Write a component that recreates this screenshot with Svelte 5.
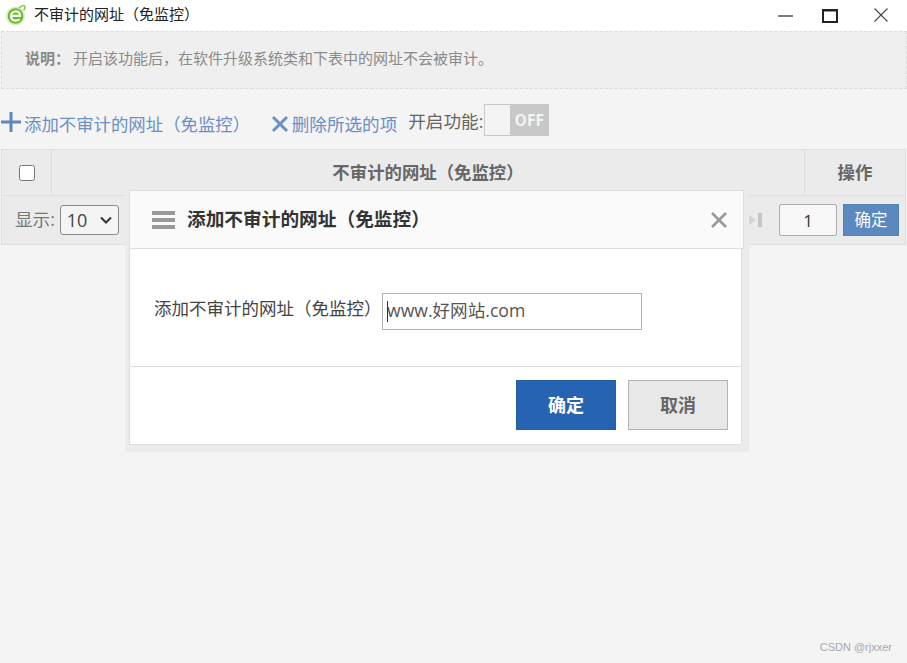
<script lang="ts">
  const title = "不审计的网址（免监控）";
  let url = $state("www.好网站.com");
  let enabled = $state(false);
  let pageSize = $state("10");
  let page = $state("1");
  let modalOpen = $state(true);
</script>

<div class="page">
  <header class="titlebar">
    <svg class="app-icon" width="20" height="22" viewBox="0 0 20 22">
      <circle cx="9.500" cy="12" r="9.500" fill="#dfe8d2" />
      <circle cx="9.500" cy="12" r="7.800" fill="#62c01a" />
      <path d="M5 11.800h9c0-3-1.900-4.400-4.400-4.400-2.800 0-4.600 2-4.600 4.700s1.800 4.600 4.700 4.600c1.600 0 2.900-.5 3.900-1.400" fill="none" stroke="#fff" stroke-width="2.200" />
      <path d="M13 4c2.200-1.900 4.500-2.800 5.500-2.200.9.600.4 2.600-.8 4.700" fill="none" stroke="#7ccb3a" stroke-width="1.500" />
    </svg>
    <span class="window-title">{title}</span>
    <div class="window-controls">
      <svg width="16" height="16" viewBox="0 0 16 16"><path d="M0 9h15" stroke="#222" stroke-width="1.200" /></svg>
      <svg width="16" height="16" viewBox="0 0 16 16"><path d="M1 3h14v12H1zM1 3.500h14" fill="none" stroke="#222" stroke-width="2" /></svg>
      <svg width="16" height="16" viewBox="0 0 16 16"><path d="M1.500 1.500l13 13M14.500 1.500l-13 13" stroke="#444" stroke-width="1.100" /></svg>
    </div>
  </header>

  <div class="notice">
    <b>说明：</b><span>开启该功能后，在软件升级系统类和下表中的网址不会被审计。</span>
  </div>

  <div class="toolbar">
    <button class="tool-btn add">
      <svg width="20" height="20" viewBox="0 0 20 20"><path d="M10 0v20M0 10h20" stroke="#5f87bd" stroke-width="3" /></svg>
      <span>添加不审计的网址（免监控）</span>
    </button>
    <button class="tool-btn remove">
      <svg width="18" height="18" viewBox="0 0 18 18"><path d="M2 2l14 14M16 2L2 16" stroke="#6b92c6" stroke-width="3" /></svg>
      <span>删除所选的项</span>
    </button>
    <span class="switch-label">开启功能:</span>
    <button class="switch" onclick={() => (enabled = !enabled)}>
      <span class="knob"></span>
      <span class="state">{enabled ? "ON" : "OFF"}</span>
    </button>
  </div>

  <div class="table">
    <div class="thead">
      <div class="cell-check"><input type="checkbox" /></div>
      <div class="cell-name">{title}</div>
      <div class="cell-action">操作</div>
    </div>
    <div class="tfoot">
      <span class="show-label">显示:</span>
      <div class="select-wrap">
        <select bind:value={pageSize}>
          <option>10</option>
          <option>20</option>
          <option>50</option>
        </select>
        <svg width="12" height="8" viewBox="0 0 12 8"><path d="M1 1.500l5 5 5-5" fill="none" stroke="#333" stroke-width="2" /></svg>
      </div>
      <svg class="last-page" width="14" height="14" viewBox="0 0 14 14">
        <path d="M0 1l8 6-8 6z" fill="#d4d4d4" />
        <path d="M10 0h4v14h-4z" fill="#c4c4c4" />
      </svg>
      <input class="page-input" bind:value={page} />
      <button class="go-btn">确定</button>
    </div>
  </div>

  <div class="watermark">CSDN @rjxxer</div>

  {#if modalOpen}
    <div class="modal">
      <div class="modal-head">
        <svg width="23" height="18" viewBox="0 0 23 18">
          <path d="M0 0h23v4H0zM0 7h23v4H0zM0 14h23v4H0z" fill="#999" />
        </svg>
        <h2>添加不审计的网址（免监控）</h2>
        <button class="close" aria-label="关闭" onclick={() => (modalOpen = false)}>
          <svg width="16" height="16" viewBox="0 0 16 16"><path d="M1 1l14 14M15 1L1 15" stroke="#999" stroke-width="2.600" /></svg>
        </button>
      </div>
      <div class="modal-body">
        <label for="url-input">添加不审计的网址（免监控）</label>
        <div class="input-wrap">
          <span class="caret"></span>
          <input id="url-input" bind:value={url} />
        </div>
      </div>
      <div class="modal-foot">
        <button class="btn primary">确定</button>
        <button class="btn" onclick={() => (modalOpen = false)}>取消</button>
      </div>
    </div>
  {/if}
</div>

<style>
  :global(body) {
    margin: 0;
    background: #f4f4f4;
    font-family: "Open Sans", "Noto Sans CJK SC", sans-serif;
  }

  .page {
    position: relative;
    height: 663px;
    overflow: hidden;
    background: #f4f4f4;
    color: #555;
  }

  button {
    font-family: inherit;
    cursor: pointer;
  }

  .titlebar {
    display: flex;
    align-items: center;
    height: 31px;
    box-sizing: border-box;
    padding: 0 0 2px 6px;
    background: #fff;
  }

  .app-icon {
    margin-right: 8px;
  }

  .window-title {
    padding-bottom: 2px;
    font-size: 15px;
    color: #222;
  }

  .window-controls {
    display: flex;
    gap: 28px;
    margin-left: auto;
    margin-right: 18px;
  }

  .window-controls svg:last-child {
    margin-left: 7px;
  }

  .notice {
    display: flex;
    align-items: center;
    height: 58px;
    box-sizing: border-box;
    margin: 0 0 0 1px;
    padding: 0 0 6px 23px;
    background: #efefef;
    border: 1px dashed #dcdcdc;
    font-size: 15px;
    color: #8a8a8a;
  }

  .notice b {
    color: #888;
    margin-right: 3px;
  }

  .toolbar {
    display: flex;
    align-items: center;
    height: 60px;
    padding-top: 1px;
    box-sizing: border-box;
    font-size: 17.600px;
  }

  .tool-btn {
    display: flex;
    align-items: center;
    padding: 8px 0 0;
    border: 0;
    background: none;
    font-size: 17.600px;
    color: #6d8fc4;
  }

  .tool-btn.add {
    gap: 3px;
    margin-left: 1px;
    font-size: 17.400px;
  }

  .tool-btn.add svg {
    margin-bottom: 4px;
  }

  .tool-btn.remove {
    gap: 3px;
    margin-left: 20.600px;
  }

  .switch-label {
    margin-left: 11px;
    padding-top: 1px;
    color: #666;
  }

  .switch {
    display: flex;
    width: 65px;
    height: 32px;
    padding: 0;
    margin-left: 1px;
    border: 1px solid #c8c8c8;
    background: #c8c8c8;
  }

  .knob {
    width: 25px;
    height: 100%;
    background: #f4f4f4;
  }

  .state {
    flex: 1;
    line-height: 30px;
    font-size: 15.500px;
    font-weight: 700;
    color: #f5f5f5;
    text-align: center;
  }

  .table {
    margin: 0 1px;
    background: #ebebeb;
    border: 1px solid #dedede;
  }

  .thead {
    display: flex;
    height: 45px;
    border-bottom: 1px solid #dedede;
    font-size: 17.400px;
    font-weight: 700;
    color: #666;
  }

  .cell-check {
    display: flex;
    align-items: center;
    justify-content: center;
    width: 50px;
    padding-left: 1px;
    box-sizing: border-box;
    border-right: 1px solid #dedede;
  }

  .cell-check input {
    width: 16px;
    height: 16px;
    margin: 0;
  }

  .cell-name {
    flex: 1;
    line-height: 45px;
    text-align: center;
  }

  .cell-action {
    width: 100px;
    line-height: 45px;
    text-align: center;
    border-left: 1px solid #dedede;
  }

  .tfoot {
    display: flex;
    align-items: center;
    height: 48px;
    padding: 0 6px 0 13px;
    font-size: 17.600px;
  }

  .show-label {
    margin-right: 5px;
    padding-bottom: 3px;
    color: #777;
  }

  .select-wrap {
    position: relative;
    display: flex;
  }

  .select-wrap svg {
    position: absolute;
    right: 7px;
    top: 11px;
    pointer-events: none;
  }

  select {
    appearance: none;
    width: 59px;
    height: 30px;
    padding: 0 0 0 6px;
    border: 1px solid #8a8a8a;
    border-radius: 3px;
    font-family: inherit;
    font-size: 18px;
    color: #444;
    background: #f4f4f4;
  }

  .last-page {
    margin-left: auto;
  }

  .page-input {
    width: 58px;
    height: 32px;
    box-sizing: border-box;
    margin-left: 17px;
    border: 1px solid #aaa;
    border-radius: 2px;
    background: #f8f8f8;
    font-family: inherit;
    font-size: 17px;
    color: #333;
    text-align: center;
  }

  .go-btn {
    width: 56px;
    height: 32px;
    margin-left: 6px;
    padding: 0 0 3px;
    border: 1px solid #4d86b5;
    background: #5b88bf;
    font-size: 16.500px;
    color: #fff;
  }

  .watermark {
    position: absolute;
    right: 15px;
    bottom: 10px;
    font-family: "Liberation Sans", sans-serif;
    font-size: 11px;
    color: #a8a8a8;
  }

  .modal {
    position: absolute;
    left: 129px;
    top: 190px;
    width: 613px;
    box-sizing: border-box;
    background: #fff;
    border: 1px solid #dedede;
    border-top: 0;
    box-shadow: 1px 0 0 5px #ebebeb, 2px 2px 0 5px #ebebeb;
  }

  .modal-head {
    display: flex;
    align-items: center;
    height: 59px;
    box-sizing: border-box;
    width: 615px;
    margin-left: -1px;
    padding-left: 22px;
    background: #fafafa;
    border: 1px solid #dedede;
  }

  .modal-head h2 {
    margin: 0 0 5px 12px;
    font-size: 18.700px;
    font-weight: 700;
    color: #333;
  }

  .close {
    display: flex;
    margin-left: auto;
    margin-right: 16px;
    padding: 0;
    border: 0;
    background: none;
  }

  .modal-body {
    display: flex;
    align-items: center;
    height: 117px;
    padding: 0 0 1px 24px;
    box-sizing: border-box;
    font-size: 17.500px;
    color: #444;
  }

  .modal-body label {
    width: 228px;
  }

  .input-wrap {
    position: relative;
    margin-top: 8px;
  }

  .input-wrap input {
    display: block;
    width: 260px;
    height: 37px;
    box-sizing: border-box;
    padding: 0 4px 3px;
    border: 1px solid #b4b4b4;
    outline: 0;
    font-family: inherit;
    font-size: 17.600px;
    color: #555;
  }

  .caret {
    position: absolute;
    left: 5px;
    top: 8px;
    width: 1px;
    height: 21px;
    background: #333;
  }

  .modal-foot {
    display: flex;
    justify-content: flex-end;
    gap: 12px;
    padding: 13px 13px 14px 0;
    border-top: 1px solid #dedede;
  }

  .btn {
    width: 100px;
    height: 50px;
    padding: 0 0 3px;
    border: 1px solid #b4b4b4;
    background: #e8e8e8;
    font-size: 18px;
    font-weight: 700;
    color: #666;
  }

  .btn.primary {
    border-color: #1c62a0;
    background: #2763b3;
    color: #fff;
  }
</style>
